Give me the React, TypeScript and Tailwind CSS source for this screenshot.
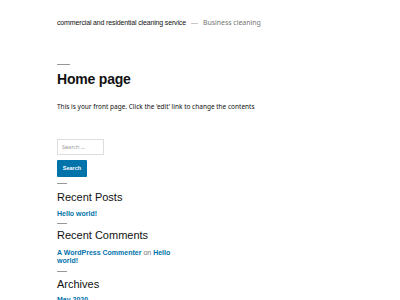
export default function App() {
  return (
    <div className="min-h-[300px] w-[400px] overflow-hidden bg-white px-[57px] font-['Liberation_Sans',Arial,sans-serif] text-[#111]">
      <header className="flex items-baseline pt-[18px] text-[7px] leading-[9px]">
        <span className="font-medium tracking-[-0.15px] text-[#111]">commercial and residential cleaning service</span>
        <span className="mx-[5px] text-[#999]">—</span>
        <span className="font-['Noto_Sans',sans-serif] text-[7px] tracking-[-0.05px] text-[#767676]">Business cleaning</span>
      </header>

      <main className="mt-[37px]">
        <div className="h-px w-[13px] bg-[#999]" />
        <h1 className="mt-[6px] text-[14px] font-bold leading-[16px] tracking-[-0.2px]">Home page</h1>
        <p className="mt-[15px] font-['Noto_Sans',sans-serif] text-[6.5px] leading-[9px] text-[#111]">
          This is your front page. Click the ‘edit’ link to change the contents
        </p>
      </main>

      <aside className="mt-[28px] w-[125px]">
        <div className="flex h-[16px] w-[47px] items-center border border-[#ddd] px-[4px] font-['Noto_Sans',sans-serif] text-[5.5px] text-[#999]">
          Search …
        </div>
        <button className="mt-[5px] flex h-[17px] w-[30px] items-center justify-center rounded-[1px] bg-[#0073aa] text-[5.5px] font-bold text-white">
          Search
        </button>

        <div className="mt-[6px] h-px w-[10px] bg-[#999]" />
        <h2 className="mt-[7px] text-[11px] leading-[13px]">Recent Posts</h2>
        <a className="mt-[5px] block text-[7px] font-bold leading-[9px] text-[#0073aa]">Hello world!</a>

        <div className="mt-[5px] h-px w-[10px] bg-[#999]" />
        <h2 className="mt-[5px] text-[11px] leading-[13px]">Recent Comments</h2>
        <p className="mt-[7px] text-[7px] font-bold leading-[8px] text-[#0073aa]">
          <span>A WordPress Commenter</span> <span className="font-normal text-[#767676]">on</span> <span>Hello world!</span>
        </p>

        <div className="mt-[6px] h-px w-[10px] bg-[#999]" />
        <h2 className="mt-[6px] text-[11px] leading-[13px]">Archives</h2>
        <a className="mt-[4px] block text-[7px] font-bold leading-[9px] text-[#0073aa]">May 2020</a>
      </aside>
    </div>
  );
}
